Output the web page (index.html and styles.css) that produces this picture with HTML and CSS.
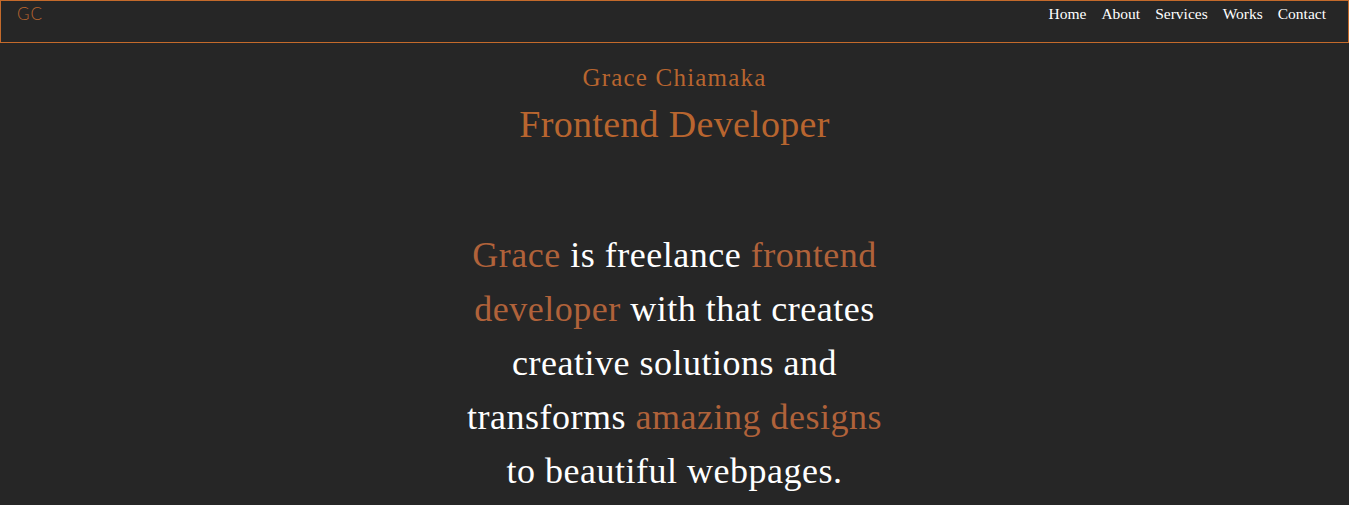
FILE: index.html
```html
<!DOCTYPE html>
<html lang="en">
<head>
<meta charset="utf-8">
<title>Grace Chiamaka</title>
<link rel="stylesheet" href="styles.css">
</head>
<body>
<header class="topbar">
  <a class="logo" href="#">GC</a>
  <nav class="nav">
    <a href="#">Home</a>
    <a href="#">About</a>
    <a href="#">Services</a>
    <a href="#">Works</a>
    <a href="#">Contact</a>
  </nav>
</header>
<main class="hero">
  <h2 class="name">Grace Chiamaka</h2>
  <h1 class="role">Frontend Developer</h1>
  <p class="intro"><span class="accent">Grace</span> is freelance <span class="accent">frontend</span> <span class="accent">developer</span> with that creates creative solutions and transforms <span class="accent">amazing designs</span> to beautiful webpages.</p>
</main>
</body>
</html>
```
FILE: styles.css
```css
* { box-sizing: border-box; }
html, body { margin: 0; padding: 0; }
body {
  background: #262626;
  color: #ffffff;
  font-family: "Liberation Serif", serif;
  height: 505px;
  overflow: hidden;
}
a { text-decoration: none; }
.topbar {
  height: 43px;
  border: 1px solid #c46a2b;
  display: flex;
  align-items: flex-start;
  justify-content: space-between;
  padding: 3px 22px 0 16px;
}
.logo {
  color: #b8652f;
  font-family: Lato, "Open Sans", sans-serif;
  font-weight: 300;
  font-size: 17px;
  line-height: 20px;
  letter-spacing: 1px;
}
.nav {
  display: flex;
  gap: 15px;
}
.nav a {
  color: #ffffff;
  font-size: 15.5px;
  line-height: 20px;
}
.hero {
  display: flex;
  flex-direction: column;
  align-items: center;
  text-align: center;
}
.name {
  margin: 20px 0 0;
  font-weight: 400;
  font-size: 25px;
  line-height: 30px;
  color: #b8652f;
  letter-spacing: 1.2px;
}
.role {
  margin: 8px 0 0;
  font-weight: 400;
  font-size: 38px;
  line-height: 46px;
  color: #b8652f;
  letter-spacing: 0.3px;
}
.intro {
  margin: 81px 0 0;
  width: 430px;
  font-size: 36px;
  line-height: 54px;
  letter-spacing: 0.5px;
}
.accent { color: #b0623a; }
```
